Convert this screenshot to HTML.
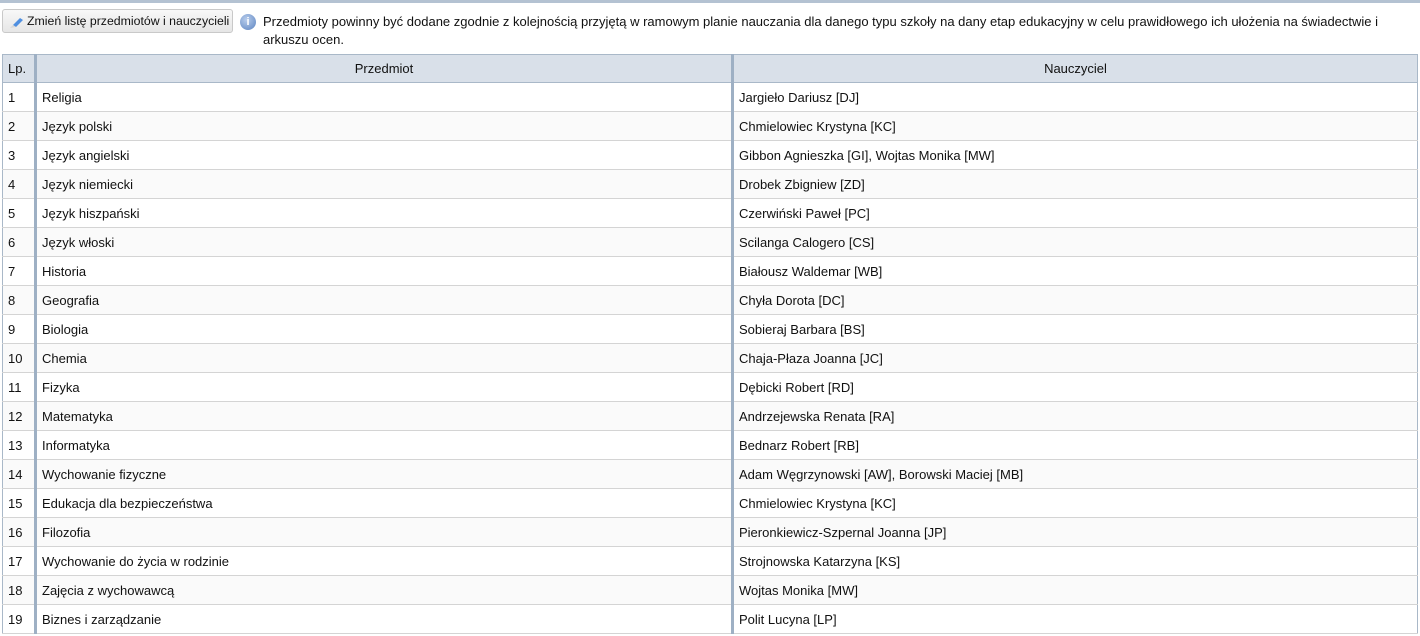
<!DOCTYPE html>
<html><head><meta charset="utf-8"><style>
body{margin:0;width:1420px;height:636px;overflow:hidden;background:#fff;font-family:Tahoma,"Liberation Sans","DejaVu Sans",sans-serif;font-size:13px;color:#111;position:relative}
.top{position:absolute;left:0;top:0;width:1420px;height:3px;background:#b4c2d2}
.btn{position:absolute;left:2px;top:9px;width:231px;height:24px;border:1px solid #c9c9c9;border-radius:3px;background:linear-gradient(#f8f8f8,#e6e6e6);box-sizing:border-box;font-size:12.3px}
.btn span{position:absolute;left:24px;top:4px;white-space:nowrap}
.info{position:absolute;left:240px;top:14px;width:16px;height:16px;border-radius:50%;background:radial-gradient(circle at 40% 35%,#b8cdec,#5b83c0);color:#fff;font-size:11px;font-weight:bold;text-align:center;line-height:16px}
.msg{position:absolute;left:263px;top:13px;width:1150px;line-height:18px}
table{position:absolute;left:2px;top:54px;width:1416px;border-collapse:collapse;border:1px solid #a9b8c8;table-layout:fixed}
td,th{height:28px;padding:0 0 0 5px;border-bottom:1px solid #d4d4d4;white-space:nowrap;text-align:left;font-weight:normal;overflow:hidden}
th{background:#d9e0e9;text-align:center;height:27px;border-bottom:1px solid #a9b8c8;padding:0}
th:first-child{text-align:left;padding-left:5px}
.c1{border-right:3px solid #9eb0c4}
.c2{border-right:3px solid #9eb0c4}
tr:nth-child(odd) td{background:#fafafa}
</style></head><body>
<div class="top"></div>
<div class="btn"><svg style="position:absolute;left:6px;top:5px" width="16" height="14" viewBox="0 0 16 14"><path d="M4 10 L11 3 L14 5 L7 12 Z" fill="#4f8fe0"/><path d="M1 13 L4 10 L7 12 Z" fill="#d8d8d8"/></svg><span>Zmień listę przedmiotów i nauczycieli</span></div>
<div class="info">i</div>
<div class="msg">Przedmioty powinny być dodane zgodnie z kolejnością przyjętą w ramowym planie nauczania dla danego typu szkoły na dany etap edukacyjny w celu prawidłowego ich ułożenia na świadectwie i<br>arkuszu ocen.</div>
<table>
<colgroup><col style="width:33px"><col style="width:697px"><col></colgroup>
<tr style="height:28px"><th class="c1">Lp.</th><th class="c2">Przedmiot</th><th>Nauczyciel</th></tr>
<tr><td class="c1">1</td><td class="c2">Religia</td><td>Jargieło Dariusz [DJ]</td></tr>
<tr><td class="c1">2</td><td class="c2">Język polski</td><td>Chmielowiec Krystyna [KC]</td></tr>
<tr><td class="c1">3</td><td class="c2">Język angielski</td><td>Gibbon Agnieszka [GI], Wojtas Monika [MW]</td></tr>
<tr><td class="c1">4</td><td class="c2">Język niemiecki</td><td>Drobek Zbigniew [ZD]</td></tr>
<tr><td class="c1">5</td><td class="c2">Język hiszpański</td><td>Czerwiński Paweł [PC]</td></tr>
<tr><td class="c1">6</td><td class="c2">Język włoski</td><td>Scilanga Calogero [CS]</td></tr>
<tr><td class="c1">7</td><td class="c2">Historia</td><td>Białousz Waldemar [WB]</td></tr>
<tr><td class="c1">8</td><td class="c2">Geografia</td><td>Chyła Dorota [DC]</td></tr>
<tr><td class="c1">9</td><td class="c2">Biologia</td><td>Sobieraj Barbara [BS]</td></tr>
<tr><td class="c1">10</td><td class="c2">Chemia</td><td>Chaja-Płaza Joanna [JC]</td></tr>
<tr><td class="c1">11</td><td class="c2">Fizyka</td><td>Dębicki Robert [RD]</td></tr>
<tr><td class="c1">12</td><td class="c2">Matematyka</td><td>Andrzejewska Renata [RA]</td></tr>
<tr><td class="c1">13</td><td class="c2">Informatyka</td><td>Bednarz Robert [RB]</td></tr>
<tr><td class="c1">14</td><td class="c2">Wychowanie fizyczne</td><td>Adam Węgrzynowski [AW], Borowski Maciej [MB]</td></tr>
<tr><td class="c1">15</td><td class="c2">Edukacja dla bezpieczeństwa</td><td>Chmielowiec Krystyna [KC]</td></tr>
<tr><td class="c1">16</td><td class="c2">Filozofia</td><td>Pieronkiewicz-Szpernal Joanna [JP]</td></tr>
<tr><td class="c1">17</td><td class="c2">Wychowanie do życia w rodzinie</td><td>Strojnowska Katarzyna [KS]</td></tr>
<tr><td class="c1">18</td><td class="c2">Zajęcia z wychowawcą</td><td>Wojtas Monika [MW]</td></tr>
<tr><td class="c1">19</td><td class="c2">Biznes i zarządzanie</td><td>Polit Lucyna [LP]</td></tr>
</table>
</body></html>
